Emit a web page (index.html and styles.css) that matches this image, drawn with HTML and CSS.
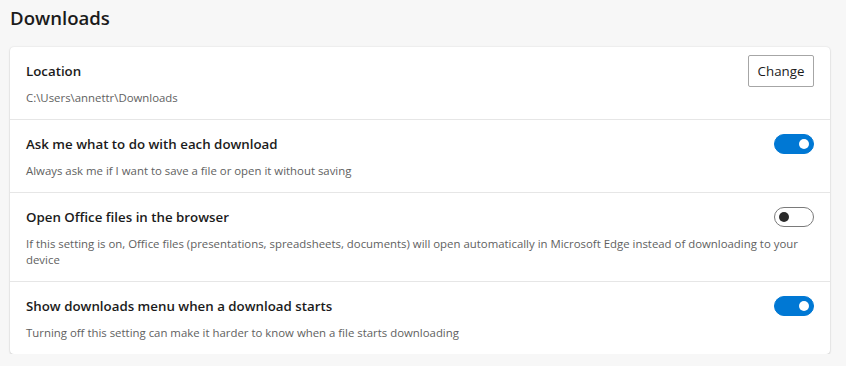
FILE: index.html
```html
<!DOCTYPE html>
<html lang="en">
<head>
    <meta charset="UTF-8">
    <title>Downloads</title>
    <link rel="stylesheet" href="styles.css">
</head>
<body>
    <h1 class="page-title">Downloads</h1>
    <div class="card">
        <div class="row">
            <div class="row-head">
                <span class="row-title">Location</span>
                <button class="change-button">Change</button>
            </div>
            <p class="row-desc">C:\Users\annettr\Downloads</p>
        </div>
        <div class="row">
            <div class="row-head">
                <span class="row-title">Ask me what to do with each download</span>
                <span class="toggle on"></span>
            </div>
            <p class="row-desc">Always ask me if I want to save a file or open it without saving</p>
        </div>
        <div class="row">
            <div class="row-head">
                <span class="row-title">Open Office files in the browser</span>
                <span class="toggle"></span>
            </div>
            <p class="row-desc">If this setting is on, Office files (presentations, spreadsheets, documents) will open automatically in Microsoft Edge instead of downloading to your device</p>
        </div>
        <div class="row">
            <div class="row-head">
                <span class="row-title">Show downloads menu when a download starts</span>
                <span class="toggle on"></span>
            </div>
            <p class="row-desc">Turning off this setting can make it harder to know when a file starts downloading</p>
        </div>
    </div>
</body>
</html>
```

FILE: styles.css
```css
body {
    font-family: "Open Sans", "Noto Sans", sans-serif;
    margin: 0;
    padding: 0 16px 0 10px;
    background-color: #f7f7f7;
    color: #1b1b1b;
}
.page-title {
    font-size: 18.6px;
    font-weight: 600;
    line-height: 28px;
    margin: 4px 0 15px;
}
.card {
    background-color: #fff;
    border-radius: 4px;
    box-shadow: 0 0 2px rgba(0, 0, 0, 0.12), 0 1px 2px rgba(0, 0, 0, 0.14);
}
.row {
    padding: 14px 16px 13px;
    border-top: 1px solid #e6e6e6;
}
.row:first-child {
    border-top: none;
}
.row-head {
    display: flex;
    justify-content: space-between;
    align-items: center;
    height: 20px;
}
.row-title {
    font-size: 13.3px;
    font-weight: 600;
    line-height: 20px;
}
.row-desc {
    font-size: 11.4px;
    line-height: 16px;
    color: #616161;
    margin: 9px 0 0;
}
.change-button {
    font-family: inherit;
    font-size: 13.3px;
    color: #1b1b1b;
    background-color: #fff;
    border: 1px solid #a6a6a6;
    border-radius: 2px;
    width: 66px;
    height: 32px;
    padding: 0;
}
.toggle {
    position: relative;
    width: 40px;
    height: 20px;
    box-sizing: border-box;
    border: 1px solid #7a7a7a;
    border-radius: 10px;
    background-color: #fff;
}
.toggle::after {
    content: "";
    position: absolute;
    top: 4px;
    left: 4px;
    width: 10px;
    height: 10px;
    border-radius: 50%;
    background-color: #2b2b2b;
}
.toggle.on {
    background-color: #0078d4;
    border-color: #0078d4;
}
.toggle.on::after {
    left: auto;
    right: 4px;
    background-color: #fff;
}
```
